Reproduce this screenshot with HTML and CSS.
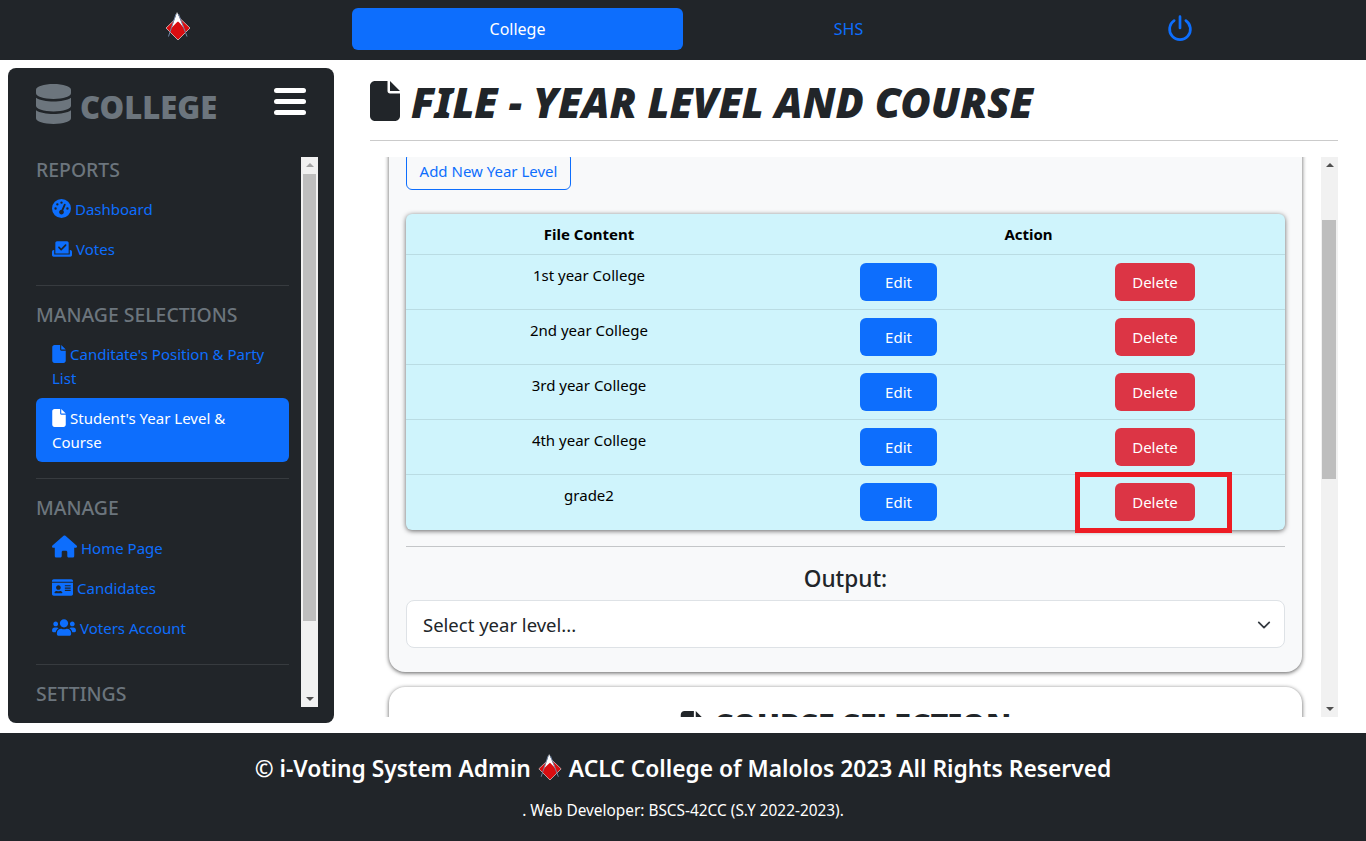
FILE: index.html
```html
<!DOCTYPE html>
<html lang="en">
<head>
    <meta charset="UTF-8">
    <meta name="viewport" content="width=device-width, initial-scale=1.0">
    <title>File - Year Level and Course</title>
    <link rel="stylesheet" href="styles.css">
</head>
<body>

    <!-- shared icons -->
    <svg class="icon-defs" aria-hidden="true">
        <symbol id="i-file" viewBox="0 0 384 512"><path d="M0 64C0 28.7 28.7 0 64 0H224V128c0 17.7 14.3 32 32 32H384V448c0 35.3-28.7 64-64 64H64c-35.3 0-64-28.7-64-64V64zm384 64H256V0L384 128z"/></symbol>
        <symbol id="i-logo" viewBox="164 11 28 30">
            <path d="M166 28L178 16.5L190 28L178 40Z" fill="#d90d10" stroke="#e6dede" stroke-width=".7"/>
            <path d="M177 12L184 28C181 24.5 179.5 22.5 178 21.5C176 23 173.500 25.500 171.500 28Z" fill="#fff"/>
            <path d="M176 14L168.500 36.500M178.500 14L187 36.500" stroke="#7387a6" stroke-width="1" fill="none"/>
        </symbol>
    </svg>

    <nav class="topbar">
        <a class="topbar-item logo-item"><svg class="logo-top"><use href="#i-logo"/></svg></a>
        <a class="topbar-item topbar-active">College</a>
        <a class="topbar-item">SHS</a>
        <a class="topbar-item">
            <svg class="power" viewBox="0 0 24 24"><path d="M12 1.5V12M6.6 5.2a9.6 9.6 0 1 0 10.8 0" fill="none" stroke="#0d6efd" stroke-width="2.5" stroke-linecap="round"/></svg>
        </a>
    </nav>

    <div class="page">
        <aside class="sidebar">
            <div class="sidebar-head">
                <svg class="db-icon" viewBox="0 0 448 512"><path d="M448 73.143v45.714C448 159.143 347.667 192 224 192S0 159.143 0 118.857V73.143C0 32.857 100.333 0 224 0s224 32.857 224 73.143zM448 176v102.857C448 319.143 347.667 352 224 352S0 319.143 0 278.857V176c48.125 33.143 136.208 48.572 224 48.572S399.874 209.143 448 176zm0 160v102.857C448 479.143 347.667 512 224 512S0 479.143 0 438.857V336c48.125 33.143 136.208 48.572 224 48.572S399.874 369.143 448 336z"/></svg>
                <span class="sidebar-title">COLLEGE</span>
                <div class="burger"><span></span><span></span><span></span></div>
            </div>
            <div class="sidebar-body">
                <div class="sidebar-nav">
                    <h5>REPORTS</h5>
                    <a class="side-link"><svg class="ic ic-gauge" viewBox="0 0 512 512"><path d="M0 256a256 256 0 1 1 512 0A256 256 0 1 1 0 256zM288 96a32 32 0 1 0 -64 0 32 32 0 1 0 64 0zM256 416c35.3 0 64-28.7 64-64c0-17.4-6.9-33.1-18.1-44.6L366 161.7c5.3-12.1-.2-26.3-12.3-31.6s-26.3 .2-31.6 12.3L257.9 288c-.6 0-1.3 0-1.9 0c-35.3 0-64 28.7-64 64s28.7 64 64 64zM176 144a32 32 0 1 0 -64 0 32 32 0 1 0 64 0zM96 288a32 32 0 1 0 0-64 32 32 0 1 0 0 64zm352-32a32 32 0 1 0 -64 0 32 32 0 1 0 64 0z"/></svg>Dashboard</a>
                    <a class="side-link"><svg class="ic ic-vote" viewBox="0 0 576 512"><path d="M96 80c0-26.5 21.5-48 48-48H432c26.5 0 48 21.5 48 48V384H96V80zm313 47c-9.4-9.4-24.6-9.4-33.9 0l-111 111-47-47c-9.4-9.4-24.6-9.4-33.9 0s-9.4 24.6 0 33.9l64 64c9.4 9.4 24.6 9.4 33.9 0L409 161c9.4-9.4 9.4-24.6 0-33.9zM0 336c0-26.5 21.5-48 48-48H64V416H512V288h16c26.5 0 48 21.5 48 48v96c0 26.5-21.5 48-48 48H48c-26.5 0-48-21.5-48-48V336z"/></svg>Votes</a>
                    <hr class="side-rule">
                    <h5>MANAGE SELECTIONS</h5>
                    <a class="side-link"><svg class="ic ic-file"><use href="#i-file"/></svg>Canditate's Position &amp; Party List</a>
                    <a class="side-link side-active"><svg class="ic ic-file"><use href="#i-file"/></svg>Student's Year Level &amp; Course</a>
                    <hr class="side-rule">
                    <h5>MANAGE</h5>
                    <a class="side-link side-home"><svg class="ic ic-home" viewBox="0 0 576 512"><path d="M575.8 255.5c0 18-15 32.1-32 32.1h-32l.7 160.2c0 2.7-.2 5.4-.5 8.1V472c0 22.1-17.9 40-40 40H456c-1.1 0-2.2 0-3.3-.1c-1.4 .1-2.8 .1-4.2 .1H416 392c-22.1 0-40-17.9-40-40V448 384c0-17.7-14.3-32-32-32H256c-17.7 0-32 14.3-32 32v64 24c0 22.1-17.9 40-40 40H160 128.1c-1.5 0-3-.1-4.5-.2c-1.2 .1-2.4 .2-3.6 .2H104c-22.1 0-40-17.9-40-40V360c0-.9 0-1.9 .1-2.8V287.6H32c-18 0-32-14-32-32.1c0-9 3-17 10-24L266.4 8c7-7 15-8 22-8s15 2 21 7L564.8 231.5c8 7 12 15 11 24z"/></svg>Home Page</a>
                    <a class="side-link"><svg class="ic ic-card" viewBox="0 0 576 512"><path d="M528 32H48C21.5 32 0 53.5 0 80v16h576V80c0-26.5-21.5-48-48-48zM0 432c0 26.5 21.5 48 48 48h480c26.5 0 48-21.5 48-48V128H0v304zm352-232c0-4.4 3.6-8 8-8h144c4.4 0 8 3.6 8 8v16c0 4.4-3.6 8-8 8H360c-4.4 0-8-3.6-8-8v-16zm0 64c0-4.4 3.6-8 8-8h144c4.4 0 8 3.6 8 8v16c0 4.4-3.6 8-8 8H360c-4.4 0-8-3.6-8-8v-16zm0 64c0-4.4 3.6-8 8-8h144c4.4 0 8 3.6 8 8v16c0 4.4-3.6 8-8 8H360c-4.4 0-8-3.6-8-8v-16zM176 192c35.3 0 64 28.7 64 64s-28.7 64-64 64-64-28.7-64-64 28.7-64 64-64zM67.1 396.2C75.5 370.5 99.6 352 128 352h8.2c12.3 5.1 25.7 8 39.8 8s27.6-2.9 39.8-8h8.2c28.4 0 52.5 18.5 60.9 44.2 3.2 9.9-5.2 19.8-15.6 19.8H82.7c-10.4 0-18.8-10-15.6-19.8z"/></svg>Candidates</a>
                    <a class="side-link"><svg class="ic ic-users" viewBox="0 0 640 512"><path d="M96 224c35.3 0 64-28.7 64-64s-28.7-64-64-64-64 28.7-64 64 28.7 64 64 64zm448 0c35.3 0 64-28.7 64-64s-28.7-64-64-64-64 28.7-64 64 28.7 64 64 64zm32 32h-64c-17.6 0-33.5 7.1-45.1 18.6 40.3 22.1 68.9 62 75.1 109.4h66c17.7 0 32-14.3 32-32v-32c0-35.3-28.7-64-64-64zm-256 0c61.9 0 112-50.1 112-112S381.9 32 320 32 208 82.1 208 144s50.1 112 112 112zm76.8 32h-8.3c-20.8 10-43.9 16-68.5 16s-47.6-6-68.5-16h-8.3C179.6 288 128 339.6 128 403.2V432c0 26.5 21.5 48 48 48h288c26.5 0 48-21.5 48-48v-28.8c0-63.6-51.6-115.2-115.2-115.2zm-223.7-13.4C161.5 263.1 145.6 256 128 256H64c-35.3 0-64 28.7-64 64v32c0 17.7 14.3 32 32 32h65.9c6.3-47.4 34.9-87.3 75.2-109.4z"/></svg>Voters Account</a>
                    <hr class="side-rule">
                    <h5>SETTINGS</h5>
                </div>
                <div class="scrollbar scrollbar-side">
                    <span class="arrow-up"></span>
                    <span class="thumb"></span>
                    <span class="arrow-down"></span>
                </div>
            </div>
        </aside>

        <main class="content">
            <h1 class="page-title"><svg class="title-icon"><use href="#i-file"/></svg>FILE - YEAR LEVEL AND COURSE</h1>
            <hr class="title-rule">

            <div class="scroll-box">
                <div class="scroll-inner">
                    <section class="card card-year">
                        <button class="btn btn-outline">Add New Year Level</button>

                        <table class="file-table">
                            <colgroup>
                                <col class="col-name">
                                <col class="col-edit">
                                <col>
                            </colgroup>
                            <thead>
                                <tr>
                                    <th>File Content</th>
                                    <th colspan="2">Action</th>
                                </tr>
                            </thead>
                            <tbody>
                                <tr>
                                    <td>1st year College</td>
                                    <td><button class="btn btn-edit">Edit</button></td>
                                    <td class="col-del"><button class="btn btn-del">Delete</button></td>
                                </tr>
                                <tr>
                                    <td>2nd year College</td>
                                    <td><button class="btn btn-edit">Edit</button></td>
                                    <td class="col-del"><button class="btn btn-del">Delete</button></td>
                                </tr>
                                <tr>
                                    <td>3rd year College</td>
                                    <td><button class="btn btn-edit">Edit</button></td>
                                    <td class="col-del"><button class="btn btn-del">Delete</button></td>
                                </tr>
                                <tr>
                                    <td>4th year College</td>
                                    <td><button class="btn btn-edit">Edit</button></td>
                                    <td class="col-del"><button class="btn btn-del">Delete</button></td>
                                </tr>
                                <tr>
                                    <td>grade2</td>
                                    <td><button class="btn btn-edit">Edit</button></td>
                                    <td class="col-del"><button class="btn btn-del">Delete</button><span class="red-mark"></span></td>
                                </tr>
                            </tbody>
                        </table>

                        <hr class="card-rule">
                        <h4 class="output-label">Output:</h4>
                        <div class="select-box">
                            <span>Select year level...</span>
                            <svg class="chevron" viewBox="0 0 16 16"><path d="M2 5l6 6 6-6" fill="none" stroke="#343a40" stroke-width="2" stroke-linecap="round" stroke-linejoin="round"/></svg>
                        </div>
                    </section>

                    <section class="card card-course">
                        <h2 class="course-title"><svg class="course-icon"><use href="#i-file"/></svg>COURSE SELECTION</h2>
                    </section>
                </div>
                <div class="scrollbar scrollbar-main">
                    <span class="arrow-up"></span>
                    <span class="thumb"></span>
                    <span class="arrow-down"></span>
                </div>
            </div>
        </main>
    </div>

    <footer class="footer">
        <p class="footer-main">© i-Voting System Admin <svg class="logo-foot"><use href="#i-logo"/></svg> ACLC College of Malolos 2023 All Rights Reserved</p>
        <p class="footer-sub">. Web Developer: BSCS-42CC (S.Y 2022-2023).</p>
    </footer>

</body>
</html>
```

FILE: styles.css
```css
* {
    box-sizing: border-box;
}
body {
    font-family: "Noto Sans", "Open Sans", sans-serif;
    font-size: 15px;
    line-height: 24px;
    margin: 0;
    height: 841px;
    overflow: hidden;
    display: flex;
    flex-direction: column;
    background-color: #fff;
    color: #212529;
}
.icon-defs {
    display: none;
}

/* top bar */
.topbar {
    height: 60px;
    flex: none;
    background-color: #212529;
    display: grid;
    grid-template-columns: 352px 331px 331px 331px;
    padding-top: 8px;
    padding-bottom: 10px;
    font-size: 16px;
}
.topbar-item {
    display: flex;
    align-items: center;
    justify-content: center;
    color: #0d6efd;
    border-radius: 6px;
}
.logo-item {
    padding-left: 4px;
    padding-bottom: 6px;
}
.topbar-active {
    background-color: #0d6efd;
    color: #fff;
}
.logo-top {
    width: 28px;
    height: 30px;
    flex: none;
}
.power {
    width: 26px;
    height: 26px;
    margin-bottom: 3px;
}

/* page body */
.page {
    height: 673px;
    flex: none;
    display: flex;
    padding: 8px 28px 10px 8px;
    gap: 36px;
}

/* sidebar */
.sidebar {
    width: 326px;
    flex: none;
    background-color: #212529;
    border-radius: 8px;
    padding: 16px 16px 16px 28px;
    display: flex;
    flex-direction: column;
}
.sidebar-head {
    height: 73px;
    flex: none;
    display: flex;
    align-items: flex-start;
    color: #6c757d;
}
.db-icon {
    width: 35px;
    height: 40px;
    fill: #6c757d;
    margin-right: 9px;
}
.sidebar-title {
    font-weight: 900;
    font-size: 31px;
    line-height: 46px;
    flex: 1;
}
.burger {
    width: 32px;
    margin-top: 4px;
    margin-right: 12px;
    display: flex;
    flex-direction: column;
    gap: 6px;
}
.burger span {
    height: 5px;
    background-color: #fff;
    border-radius: 3px;
}
.sidebar-body {
    flex: 1;
    min-height: 0;
    display: flex;
    gap: 12px;
    overflow: hidden;
}
.sidebar-nav {
    width: 253px;
    flex: none;
}
.sidebar-nav h5 {
    margin: 0 0 6px;
    font-size: 19.4px;
    font-weight: 500;
    line-height: 26px;
    color: #6c757d;
}
.side-link {
    display: block;
    padding: 8px 16px;
    color: #0d6efd;
    border-radius: 6px;
}
.side-active {
    background-color: #0d6efd;
    color: #fff;
}
.side-home {
    padding-top: 9px;
}
.side-rule {
    margin: 16px 0;
    border: 0;
    border-top: 1px solid #373b3f;
}
.ic {
    fill: currentColor;
    margin-right: 4px;
    vertical-align: -3px;
}
.ic-gauge { width: 19px; height: 19px; }
.ic-vote { width: 20px; height: 18px; }
.ic-file { width: 14px; height: 18px; }
.ic-home { width: 25px; height: 23px; margin-top: -4px; margin-bottom: -3px; vertical-align: -1px; }
.ic-card { width: 21px; height: 19px; }
.ic-users { width: 24px; height: 19px; }

/* fake native scrollbars */
.scrollbar {
    width: 17px;
    flex: none;
    background-color: #f1f1f1;
    display: flex;
    flex-direction: column;
    position: relative;
}
.thumb {
    position: absolute;
    left: 2px;
    width: 13px;
    background-color: #bebebe;
}
.scrollbar-side .thumb { top: 17px; height: 447px; }
.scrollbar-main .thumb { top: 63px; height: 259px; left: 1px; width: 14px; }
.arrow-up, .arrow-down {
    position: absolute;
    left: 5px;
    width: 0;
    height: 0;
    border-left: 4px solid transparent;
    border-right: 4px solid transparent;
}
.arrow-up {
    top: 6px;
    border-bottom: 4px solid #505050;
}
.arrow-down {
    bottom: 6px;
    border-top: 4px solid #505050;
}
.scrollbar-side .arrow-up {
    border-bottom-color: #a3a3a3;
}

/* main content */
.content {
    flex: 1;
    min-width: 0;
    display: flex;
    flex-direction: column;
}
.page-title {
    margin: 13px 0 0;
    height: 58px;
    font-size: 41.6px;
    line-height: 42px;
    font-weight: 900;
    font-style: italic;
    display: flex;
    align-items: flex-start;
    white-space: nowrap;
}
.title-icon {
    width: 30px;
    height: 40px;
    margin-right: 11px;
    fill: #212529;
    flex: none;
}
.title-rule {
    margin: 1px 0 16px;
    border: 0;
    border-top: 1px solid #cbcbcb;
}
.scroll-box {
    height: 560px;
    flex: none;
    display: flex;
    overflow: hidden;
}
.scroll-inner {
    flex: 1;
    min-width: 0;
    padding: 0 19px;
    overflow: hidden;
}
.card {
    border-radius: 16px;
    box-shadow: 0 1px 4px rgba(0, 0, 0, 0.65);
}
.card-year {
    margin-top: -60px;
    height: 575px;
    padding: 55px 17px 0;
    background-color: #f8f9fa;
}
.card-course {
    margin-top: 15px;
    height: 200px;
    background-color: #fff;
    padding-top: 20px;
}
.course-title {
    margin: 0;
    text-align: center;
    font-size: 30.3px;
    line-height: 36px;
    font-weight: 900;
}
.course-icon {
    width: 24px;
    height: 30px;
    margin-right: 10px;
    fill: #212529;
    vertical-align: -5px;
}

/* buttons */
.btn {
    font-family: inherit;
    font-size: 15px;
    line-height: 24px;
    height: 38px;
    padding: 0;
    border: 1px solid transparent;
    border-radius: 6px;
    color: #fff;
}
.btn-outline {
    width: 165px;
    display: block;
    border-color: #0d6efd;
    color: #0d6efd;
    background-color: transparent;
}
.btn-edit {
    width: 77px;
    background-color: #0d6efd;
}
.btn-del {
    width: 80px;
    background-color: #dc3545;
}

/* table */
.file-table {
    width: 879px;
    margin-top: 24px;
    table-layout: fixed;
    border-collapse: separate;
    border-spacing: 0;
    background-color: #cff4fc;
    border-radius: 6px;
    box-shadow: 0 1px 5px rgba(0, 0, 0, 0.6);
    color: #000;
    font-size: 15px;
}
.file-table th {
    height: 41px;
    font-weight: 700;
    text-align: center;
    padding: 8px;
    border-bottom: 1px solid #badce3;
}
.file-table td {
    height: 55px;
    text-align: center;
    vertical-align: top;
    padding: 8px;
    border-bottom: 1px solid #badce3;
}
.file-table tr:last-child td {
    border-bottom: 0;
}
.col-name {
    width: 366px;
}
.col-edit {
    width: 253px;
}
.col-del {
    position: relative;
}
.red-mark {
    position: absolute;
    left: 50px;
    top: -3px;
    width: 157px;
    height: 61px;
    border: 5px solid #ed1c24;
}

.card-rule {
    margin: 16px 0 0;
    border: 0;
    border-top: 1px solid #c4c6c8;
}
.output-label {
    margin: 16px 0 5px;
    text-align: center;
    font-size: 22.6px;
    line-height: 32px;
    font-weight: 500;
}
.select-box {
    height: 48px;
    padding: 1px 13px 0 16px;
    background-color: #fff;
    border: 1px solid #dee2e6;
    border-radius: 8px;
    font-size: 18.5px;
    display: flex;
    align-items: center;
    justify-content: space-between;
}
.chevron {
    width: 14px;
    height: 14px;
}

/* footer */
.footer {
    flex: 1;
    background-color: #212529;
    color: #fff;
    text-align: center;
}
.footer-main {
    margin: 18px 0 0;
    font-size: 22.8px;
    line-height: 36px;
    font-weight: 600;
}
.logo-foot {
    width: 26px;
    height: 28px;
    vertical-align: -4px;
}
.footer-sub {
    margin: 12px 0 0;
    font-size: 15.4px;
    line-height: 24px;
}
```
